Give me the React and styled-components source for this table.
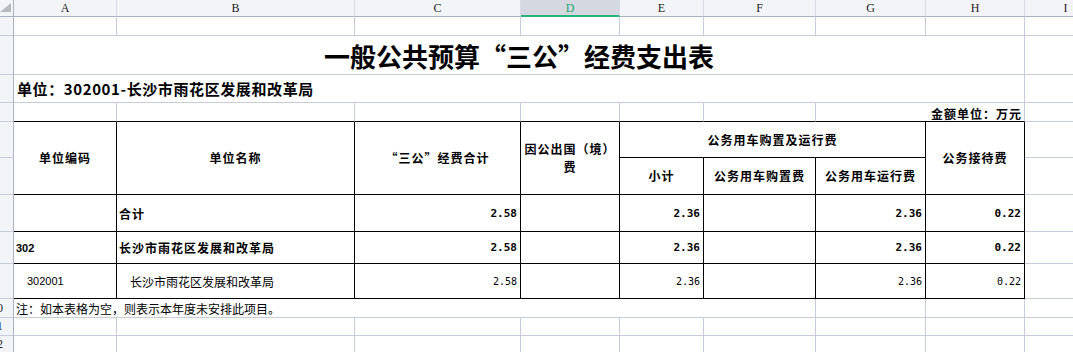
import React from 'react';
import styled, { createGlobalStyle, css } from 'styled-components';

const GRID = '#c6ccdd';
const HEAD_LINE = '#a9b1c7';
const HEAD_SEP = '#d6dae4';
const HEAD_BG = '#f3f4f7';
const CJK = '"Noto Sans CJK SC", "Liberation Sans", sans-serif';

const Global = createGlobalStyle`
  html, body { margin: 0; padding: 0; background: #fff; }
  body { font-family: ${CJK}; overflow: hidden; color: #000; }
`;

const Sheet = styled.div`
  display: grid;
  grid-template-columns: 14px 103px 238px 166px 99px 84px 112px 110px 99px 82px;
  grid-template-rows: 17px 19px 39px 28px 19px 36px 37px 37px 32px 35px 19px 18px 18px;
  width: 1073px;
  height: 352px;
  overflow: hidden;
`;

const place = css`
  grid-column: ${(p) => p.$c} / span ${(p) => p.$cs || 1};
  grid-row: ${(p) => p.$r} / span ${(p) => p.$rs || 1};
  box-sizing: border-box;
  min-width: 0;
  overflow: hidden;
  display: flex;
  align-items: center;
`;

const Corner = styled.div`
  ${place}
  background: ${HEAD_BG};
  border-right: 1px solid ${HEAD_LINE};
  border-bottom: 1px solid ${HEAD_LINE};
  justify-content: flex-end;
  align-items: flex-end;
  padding: 0 1px 3px 0;
`;

const ColHead = styled.div`
  ${place}
  justify-content: center;
  background: ${(p) => (p.$active ? '#d5d8e0' : HEAD_BG)};
  color: ${(p) => (p.$active ? '#1fa566' : '#222')};
  border-right: 1px solid ${HEAD_SEP};
  border-bottom: ${(p) => (p.$active ? '2px solid #27b47b' : `1px solid ${HEAD_LINE}`)};
  font-family: "Liberation Serif", serif;
  font-size: 12px;
  padding-top: ${(p) => (p.$active ? '1px' : '0')};
`;

const RowHead = styled.div`
  ${place}
  background: ${HEAD_BG};
  border-right: 1px solid ${HEAD_LINE};
  border-bottom: 1px solid ${GRID};
  font-family: "Liberation Serif", serif;
  font-size: 12px;
  color: #222;
`;

const RowLabel = styled.span`
  flex: 0 0 24px;
  margin-left: -15px;
  text-align: center;
`;

const Cell = styled.div`
  ${place}
  border-right: 1px solid ${(p) => (p.$edgeR ? '#000' : GRID)};
  border-bottom: 1px solid ${(p) => (p.$edgeB ? '#000' : GRID)};
`;

const Title = styled(Cell)`
  justify-content: center;
  font-size: 26px;
  font-weight: 700;
  letter-spacing: 0;
`;

const Unit = styled(Cell)`
  padding-left: 3px;
  font-size: 15px;
  font-weight: 700;
  letter-spacing: 0.6px;
`;

const MoneyUnit = styled(Cell)`
  justify-content: flex-end;
  padding-right: 2px;
  padding-top: 2px;
  font-size: 12px;
  font-weight: 700;
  letter-spacing: 1px;
`;

const Note = styled(Cell)`
  padding-left: 2px;
  font-size: 12px;
`;

const TableCell = styled.div`
  ${place}
  border-right: 1px solid #000;
  border-bottom: 1px solid #000;
`;

const HeadCell = styled(TableCell)`
  justify-content: center;
  text-align: center;
  font-size: 12px;
  font-weight: 700;
  letter-spacing: 1px;
  line-height: 18px;
  padding: 0 2px;
`;

const TextCell = styled(TableCell)`
  padding-left: ${(p) => (p.$indent ? '13px' : '2px')};
  font-size: 12px;
  font-weight: ${(p) => (p.$bold ? 700 : 400)};
  letter-spacing: ${(p) => (p.$bold ? '1px' : '0')};
`;

const CodeCell = styled(TableCell)`
  padding-left: ${(p) => (p.$indent ? '13px' : '2px')};
  font-family: "Liberation Sans", sans-serif;
  font-size: 11px;
  font-weight: ${(p) => (p.$bold ? 700 : 400)};
`;

const NumCell = styled(TableCell)`
  justify-content: flex-end;
  padding-right: 3px;
  font-family: "DejaVu Sans Mono", monospace;
  font-size: ${(p) => (p.$bold ? '11px' : '10px')};
  font-weight: ${(p) => (p.$bold ? 700 : 400)};
`;

const colLetters = ['A', 'B', 'C', 'D', 'E', 'F', 'G', 'H', 'I'];

const rows = [
  { code: '', name: '合计', total: '2.58', abroad: '', sub: '2.36', buy: '', run: '2.36', recv: '0.22', bold: true, indent: false },
  { code: '302', name: '长沙市雨花区发展和改革局', total: '2.58', abroad: '', sub: '2.36', buy: '', run: '2.36', recv: '0.22', bold: true, indent: false },
  { code: '302001', name: '长沙市雨花区发展和改革局', total: '2.58', abroad: '', sub: '2.36', buy: '', run: '2.36', recv: '0.22', bold: false, indent: true },
];

function Triangle() {
  return (
    <svg width="12" height="10" viewBox="0 0 12 10">
      <polygon points="11,0 11,9 0,9" fill="#b6b9bf" />
    </svg>
  );
}

function range(a, b) {
  const out = [];
  for (let i = a; i <= b; i += 1) out.push(i);
  return out;
}

export default function App() {
  return (
    <>
      <Global />
      <Sheet>
        <Corner $c={1} $r={1}>
          <Triangle />
        </Corner>
        {colLetters.map((l, i) => (
          <ColHead key={l} $c={i + 2} $r={1} $active={l === 'D'}>
            {l}
          </ColHead>
        ))}
        {range(1, 12).map((n) => (
          <RowHead key={n} $c={1} $r={n + 1}>
            {n >= 10 ? <RowLabel>{n}</RowLabel> : null}
          </RowHead>
        ))}

        {/* row 1 */}
        {range(2, 10).map((c) => (
          <Cell key={`r1-${c}`} $c={c} $r={2} />
        ))}

        {/* row 2 */}
        <Title $c={2} $cs={8} $r={3}>一般公共预算“三公”经费支出表</Title>
        <Cell $c={10} $r={3} />

        {/* row 3 */}
        <Unit $c={2} $cs={8} $r={4}>单位：302001-长沙市雨花区发展和改革局</Unit>
        <Cell $c={10} $r={4} />

        {/* row 4 */}
        {range(2, 7).map((c) => (
          <Cell key={`r4-${c}`} $c={c} $r={5} $edgeB />
        ))}
        <MoneyUnit $c={8} $cs={2} $r={5} $edgeB>金额单位：万元</MoneyUnit>
        <Cell $c={10} $r={5} />

        {/* header rows 5-6 */}
        <HeadCell $c={2} $r={6} $rs={2}>单位编码</HeadCell>
        <HeadCell $c={3} $r={6} $rs={2}>单位名称</HeadCell>
        <HeadCell $c={4} $r={6} $rs={2}>“三公”经费合计</HeadCell>
        <HeadCell $c={5} $r={6} $rs={2}>因公出国（境）费</HeadCell>
        <HeadCell $c={6} $cs={3} $r={6}>公务用车购置及运行费</HeadCell>
        <HeadCell $c={9} $r={6} $rs={2}>公务接待费</HeadCell>
        <Cell $c={10} $r={6} />
        <HeadCell $c={6} $r={7}>小计</HeadCell>
        <HeadCell $c={7} $r={7}>公务用车购置费</HeadCell>
        <HeadCell $c={8} $r={7}>公务用车运行费</HeadCell>
        <Cell $c={10} $r={7} />

        {/* data rows 7-9 */}
        {rows.map((row, i) => {
          const r = 8 + i;
          return (
            <React.Fragment key={`d-${i}`}>
              <CodeCell $c={2} $r={r} $bold={row.bold} $indent={row.indent}>{row.code}</CodeCell>
              <TextCell $c={3} $r={r} $bold={row.bold} $indent={row.indent}>{row.name}</TextCell>
              <NumCell $c={4} $r={r} $bold={row.bold}>{row.total}</NumCell>
              <NumCell $c={5} $r={r} $bold={row.bold}>{row.abroad}</NumCell>
              <NumCell $c={6} $r={r} $bold={row.bold}>{row.sub}</NumCell>
              <NumCell $c={7} $r={r} $bold={row.bold}>{row.buy}</NumCell>
              <NumCell $c={8} $r={r} $bold={row.bold}>{row.run}</NumCell>
              <NumCell $c={9} $r={r} $bold={row.bold}>{row.recv}</NumCell>
              <Cell $c={10} $r={r} />
            </React.Fragment>
          );
        })}

        {/* row 10 */}
        <Note $c={2} $cs={6} $r={11}>注：如本表格为空，则表示本年度未安排此项目。</Note>
        <Cell $c={8} $r={11} />
        <Cell $c={9} $r={11} />
        <Cell $c={10} $r={11} />

        {/* rows 11-12 */}
        {[12, 13].map((r) =>
          range(2, 10).map((c) => <Cell key={`r${r}-${c}`} $c={c} $r={r} />)
        )}
      </Sheet>
    </>
  );
}
